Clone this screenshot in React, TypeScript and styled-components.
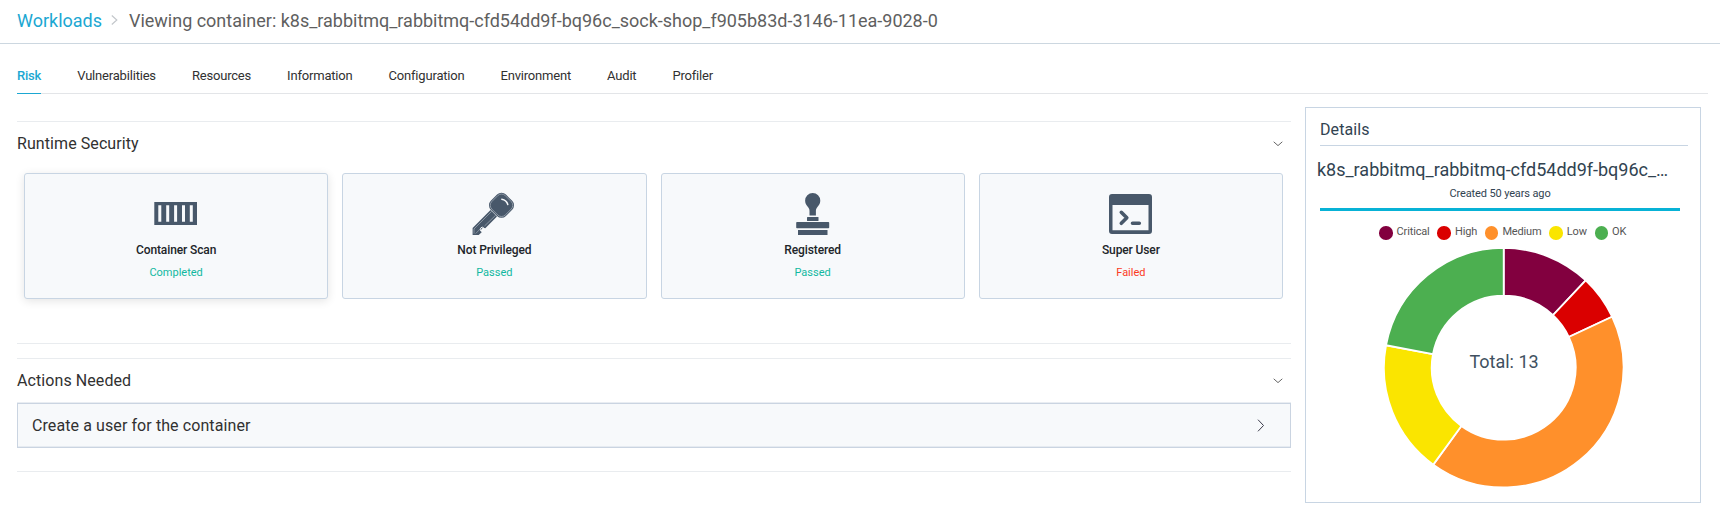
import React from "react";
import styled, { createGlobalStyle } from "styled-components";

const GlobalStyle = createGlobalStyle`
  * { box-sizing: border-box; }
  body {
    margin: 0;
    background: #fff;
    color: #313131;
    font-family: Roboto, "Liberation Sans", sans-serif;
  }
`;

const Page = styled.div`
  height: 531px;
  overflow: hidden;
`;

const Header = styled.header`
  display: flex;
  align-items: center;
  height: 44px;
  padding: 0 17px 3px;
  border-bottom: 1px solid #ccd7e0;
  font-size: 18px;
  letter-spacing: -0.01px;
  white-space: nowrap;
`;

const Crumb = styled.a`
  color: #1ba7d2;
`;

const CrumbArrow = styled.svg`
  margin: 0 11px 0 9px;
  flex: none;
`;

const CrumbCurrent = styled.span`
  color: #5f5f5f;
`;

const Tabs = styled.nav`
  display: flex;
  gap: 36px;
  height: 50px;
  margin: 0 12px 0 17px;
  border-bottom: 1px solid #e3e5e8;
`;

const Tab = styled.a<{ $active?: boolean }>`
  height: 50px;
  padding-top: 24px;
  line-height: 16px;
  font-size: 13px;
  letter-spacing: -0.19px;
  font-weight: ${(p) => (p.$active ? 500 : 400)};
  color: ${(p) => (p.$active ? "#1ba7d2" : "#313131")};
  border-bottom: 1px solid ${(p) => (p.$active ? "#1ba7d2" : "transparent")};
`;

const Body = styled.div`
  display: flex;
  align-items: flex-start;
  padding-left: 17px;
`;

const Main = styled.main`
  width: 1274px;
  padding-top: 27px;
`;

const Section = styled.section<{ $height: number }>`
  height: ${(p) => p.$height}px;
  margin-bottom: 14px;
  border-top: 1px solid #e9ecef;
  border-bottom: 1px solid #e9ecef;
`;

const SectionHead = styled.div`
  display: flex;
  align-items: center;
  justify-content: space-between;
  height: 44px;
  padding: 0 8px 2px 0;
  font-size: 16px;
  letter-spacing: 0.08px;
`;

const CardRow = styled.div`
  display: grid;
  grid-template-columns: repeat(4, 1fr);
  gap: 14px;
  padding: 7px 8px 0 7px;
`;

const Card = styled.article<{ $raised?: boolean }>`
  display: flex;
  flex-direction: column;
  align-items: center;
  height: 126px;
  padding-top: 17px;
  border: 1px solid #c8d5e3;
  border-radius: 3px;
  background: #f7f9fb;
  box-shadow: ${(p) => (p.$raised ? "0 2px 10px rgba(0, 0, 0, 0.11)" : "none")};
`;

const CardTitle = styled.div`
  margin-top: 7px;
  line-height: 16px;
  font-size: 12px;
  letter-spacing: -0.12px;
  font-weight: 500;
  color: #212529;
`;

const CardStatus = styled.div<{ $failed?: boolean }>`
  margin-top: 7px;
  line-height: 16px;
  font-size: 11px;
  color: ${(p) => (p.$failed ? "#fb3b24" : "#11b8a0")};
`;

const Action = styled.div`
  display: flex;
  align-items: center;
  justify-content: space-between;
  height: 45px;
  padding: 0 25px 0 14px;
  border: 1px solid #cad4e1;
  background: #f7f9fb;
  box-shadow: 0 -1px #e9edf2, inset 0 -1px #e6ebf1;
  font-size: 16px;
  letter-spacing: 0.09px;
`;

const Panel = styled.aside`
  width: 396px;
  height: 396px;
  margin: 13px 0 0 14px;
  border: 1px solid #c8d5e3;
`;

const PanelTitle = styled.div`
  height: 38px;
  margin: 0 12px 0 14px;
  padding-top: 12px;
  line-height: 20px;
  font-size: 16px;
  letter-spacing: 0.08px;
  color: #314351;
  border-bottom: 1px solid #c8d5e3;
`;

const PanelName = styled.div`
  margin: 12px 0 0 11px;
  white-space: nowrap;
  line-height: 24px;
  font-size: 18px;
  letter-spacing: -0.01px;
  color: #314351;
`;

const Created = styled.div`
  margin: 4px 20px 0 14px;
  padding-bottom: 6px;
  text-align: center;
  line-height: 16px;
  font-size: 11px;
  letter-spacing: -0.12px;
  color: #314351;
  border-bottom: 3px solid #08b2d6;
`;

const Legend = styled.div`
  display: flex;
  gap: 7.7px;
  margin: 13px 0 0 73px;
  font-size: 11px;
  letter-spacing: -0.15px;
  line-height: 16px;
  color: #555;
`;

const LegendItem = styled.span`
  display: flex;
  gap: 4px;
`;

const Dot = styled.i<{ $color: string }>`
  width: 13.6px;
  height: 13.6px;
  margin-top: 2px;
  border-radius: 50%;
  background: ${(p) => p.$color};
`;

const Chart = styled.svg`
  display: block;
  margin: 7px 0 0 77px;
`;

const slices = [
  { label: "Critical", share: 12, color: "#82003f" },
  { label: "High", share: 6, color: "#da0000" },
  { label: "Medium", share: 42, color: "#ff902b" },
  { label: "Low", share: 18, color: "#fae500" },
  { label: "OK", share: 22, color: "#4caf50" },
];

const CENTER_X = 120.7;
const CENTER_Y = 120.7;

function point(percent: number, radius: number) {
  const angle = (percent / 100) * Math.PI * 2;
  return `${CENTER_X + radius * Math.sin(angle)} ${CENTER_Y - radius * Math.cos(angle)}`;
}

function Donut() {
  const outer = 119.8;
  const inner = 72;
  let start = 0;
  return (
    <Chart width="242" height="242" viewBox="0 0 242 242">
      {slices.map((s) => {
        const from = start;
        const to = start + s.share;
        start = to;
        return (
          <path
            key={s.label}
            d={`M${point(from, outer)}A${outer} ${outer} 0 0 1 ${point(to, outer)}L${point(to, inner)}A${inner} ${inner} 0 0 0 ${point(from, inner)}Z`}
            fill={s.color}
            stroke="#fff"
            strokeWidth="1.8"
          />
        );
      })}
      <text x="121" y="120.5" textAnchor="middle" fontSize="18" fill="#40505f">
        Total: 13
      </text>
    </Chart>
  );
}

const ICON = "#48586a";

const ContainerIcon = () => (
  <svg width="44" height="44" viewBox="0 0 44 44">
    <path
      fill={ICON}
      fillRule="evenodd"
      d="M.3 11H43v23H.3ZM4.3 14.2v16.5h3V14.2ZM12.2 14.2v16.5h3V14.2ZM20.1 14.2v16.5h3V14.2ZM28 14.2v16.5h3V14.2ZM35.8 14.2v16.5h3V14.2Z"
    />
  </svg>
);

const KeyIcon = () => (
  <svg width="44" height="44" viewBox="0 0 44 44">
    <path fill={ICON} d="M18.5 19 .6 37V44H6.700L9.700 41.200 8.500 39.500 10.700 36.800 13.300 37.300 25 25.500Z" />
    <path fill="none" stroke="#a3adb8" strokeWidth=".7" d="M19.700 20.300 2 38v4.700M3.600 42.600 8 38.200M12.500 35 23.700 24.200" />
    <g transform="rotate(45 29.500 14.300)">
      <rect x="18.800" y="3.600" width="21.400" height="21.400" rx="6.300" fill={ICON} />
      <rect x="20" y="4.800" width="19" height="19" rx="5.300" fill="none" stroke="#a3adb8" strokeWidth=".7" />
    </g>
    <path fill="none" stroke="#f7f9fb" strokeWidth="1.500" strokeLinecap="round" d="M29.800 8.200q4.700.8 6 5.300" />
    <path fill="none" stroke="#f7f9fb" strokeWidth="1" d="M12.300 37.500q-1.800-2.200-3.300-.8t0 3.600" />
  </svg>
);

const StampIcon = () => (
  <svg width="44" height="44" viewBox="0 0 44 44">
    <g fill={ICON}>
      <path d="M21.7 2a7.7 7.7 0 0 1 7.6 7.7c0 3.3-2 5-3.4 7-.9 1.4-1 2.500-1 3.300V24.500H18.500V20c0-.8-.1-1.900-1-3.300-1.400-2-3.400-3.700-3.400-7A7.700 7.700 0 0 1 21.700 2Z" />
      <rect x="16" y="26" width="11.500" height="4" rx=".5" />
      <rect x="5.200" y="31" width="33" height="6.200" rx=".8" />
      <rect x="7" y="39" width="29.500" height="5" />
    </g>
  </svg>
);

const TerminalIcon = () => (
  <svg width="44" height="44" viewBox="0 0 44 44">
    <path
      fill={ICON}
      fillRule="evenodd"
      d="M3 3h37q3 0 3 3v34q0 3-3 3H3q-3 0-3-3V6q0-3 3-3Zm.5 11v25.300h36V14Z"
    />
    <path
      fill="none"
      stroke={ICON}
      strokeWidth="3.600"
      strokeLinecap="round"
      strokeLinejoin="round"
      d="m12.300 21.300 5.500 5.500-5.500 5.500M23.500 32.200h6.800"
    />
  </svg>
);

const checks = [
  { title: "Container Scan", status: "Completed", Icon: ContainerIcon, raised: true },
  { title: "Not Privileged", status: "Passed", Icon: KeyIcon },
  { title: "Registered", status: "Passed", Icon: StampIcon },
  { title: "Super User", status: "Failed", Icon: TerminalIcon, failed: true },
];

const ChevronSvg = styled.svg`
  margin-top: 2px;
`;

const Chevron = () => (
  <ChevronSvg width="10" height="6" viewBox="0 0 10 6" fill="none" stroke="#666">
    <path d="m.7.8 4.300 3.800L9.300.8" />
  </ChevronSvg>
);

const tabs = [
  "Risk",
  "Vulnerabilities",
  "Resources",
  "Information",
  "Configuration",
  "Environment",
  "Audit",
  "Profiler",
];

export default function App() {
  return (
    <Page>
      <GlobalStyle />
      <Header>
        <Crumb>Workloads</Crumb>
        <CrumbArrow width="7" height="12" viewBox="0 0 7 12" fill="none" stroke="#c3c7cb" strokeWidth="1.200">
          <path d="m.8 1.500 5 4.500-5 4.500" />
        </CrumbArrow>
        <CrumbCurrent>
          Viewing container: k8s_rabbitmq_rabbitmq-cfd54dd9f-bq96c_sock-shop_f905b83d-3146-11ea-9028-0
        </CrumbCurrent>
      </Header>
      <Tabs>
        {tabs.map((t, i) => (
          <Tab key={t} $active={i === 0}>
            {t}
          </Tab>
        ))}
      </Tabs>
      <Body>
        <Main>
          <Section $height={223}>
            <SectionHead>
              Runtime Security
              <Chevron />
            </SectionHead>
            <CardRow>
              {checks.map(({ title, status, Icon, raised, failed }) => (
                <Card key={title} $raised={raised}>
                  <Icon />
                  <CardTitle>{title}</CardTitle>
                  <CardStatus $failed={failed}>{status}</CardStatus>
                </Card>
              ))}
            </CardRow>
          </Section>
          <Section $height={114}>
            <SectionHead>
              Actions Needed
              <Chevron />
            </SectionHead>
            <Action>
              Create a user for the container
              <svg width="8" height="13" viewBox="0 0 8 13" fill="none" stroke="#3b3b4b">
                <path d="m1 .7 5.500 5.800L1 12.300" />
              </svg>
            </Action>
          </Section>
        </Main>
        <Panel>
          <PanelTitle>Details</PanelTitle>
          <PanelName>k8s_rabbitmq_rabbitmq-cfd54dd9f-bq96c_…</PanelName>
          <Created>Created 50 years ago</Created>
          <Legend>
            {slices.map((s) => (
              <LegendItem key={s.label}>
                <Dot $color={s.color} />
                {s.label}
              </LegendItem>
            ))}
          </Legend>
          <Donut />
        </Panel>
      </Body>
    </Page>
  );
}
